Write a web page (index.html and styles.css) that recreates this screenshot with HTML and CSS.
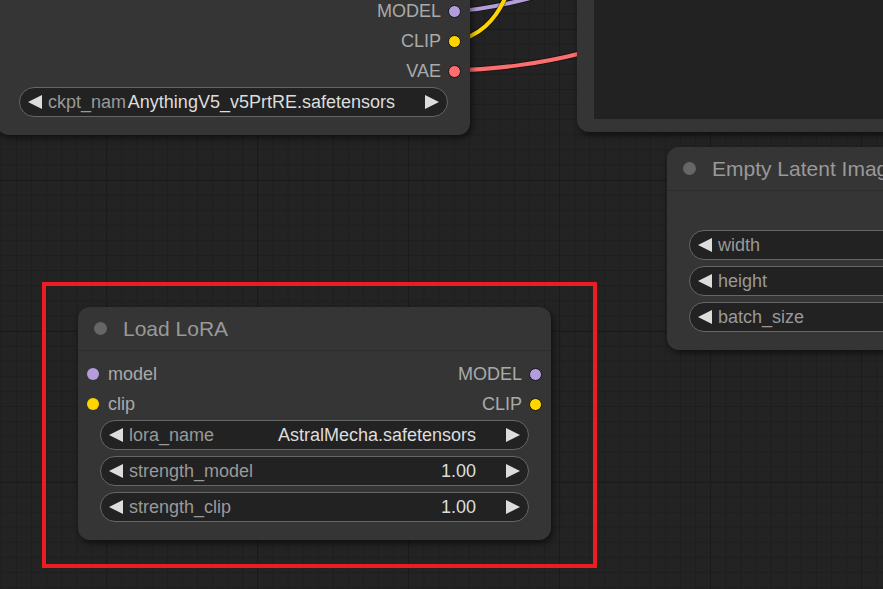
FILE: index.html
```html
<!DOCTYPE html>
<html>
<head>
<meta charset="utf-8">
<link rel="stylesheet" href="styles.css">
</head>
<body>
<div class="canvas">
  <svg class="links" width="883" height="589" viewBox="0 0 883 589">
    <g fill="none" stroke-linecap="round">
      <path d="M455 11 C 480 10, 510 4, 545 -6" stroke="rgba(0,0,0,0.35)" stroke-width="6"/>
      <path d="M455 11 C 480 10, 510 4, 545 -6" stroke="#b39ddb" stroke-width="4"/>
      <path d="M455 40 C 478 38, 496 20, 506 -4" stroke="rgba(0,0,0,0.35)" stroke-width="6"/>
      <path d="M455 40 C 478 38, 496 20, 506 -4" stroke="#ffd500" stroke-width="4"/>
      <path d="M455 70 C 490 70, 540 64, 582 53" stroke="rgba(0,0,0,0.35)" stroke-width="6"/>
      <path d="M455 70 C 490 70, 540 64, 582 53" stroke="#ff6e6e" stroke-width="4"/>
    </g>
  </svg>

  <!-- Load Checkpoint (cut off at top) -->
  <div class="node node-ckpt">
    <div class="title"><span class="tdot"></span><span class="ttext">Load Checkpoint</span></div>
    <div class="body">
      <div class="slot"><span></span><span class="out">MODEL <i class="dot model ring"></i></span></div>
      <div class="slot"><span></span><span class="out">CLIP <i class="dot clip ring"></i></span></div>
      <div class="slot"><span></span><span class="out">VAE <i class="dot vae ring"></i></span></div>
      <div class="widgets">
        <div class="widget"><span class="arr l"></span><span class="wlabel">ckpt_nam</span><span class="wvalue">AnythingV5_v5PrtRE.safetensors</span><span class="arr r"></span></div>
      </div>
    </div>
  </div>

  <!-- Image preview node (cut off) -->
  <div class="node node-preview">
    <div class="preview-area"></div>
  </div>

  <!-- Empty Latent Image -->
  <div class="node node-latent">
    <div class="title"><span class="tdot"></span><span class="ttext">Empty Latent Image</span></div>
    <div class="body">
      <div class="slot"><span></span><span class="out">LATENT <i class="dot latent ring"></i></span></div>
      <div class="widgets">
        <div class="widget"><span class="arr l"></span><span class="wlabel">width</span><span class="wvalue">512</span><span class="arr r"></span></div>
        <div class="widget"><span class="arr l"></span><span class="wlabel">height</span><span class="wvalue">512</span><span class="arr r"></span></div>
        <div class="widget"><span class="arr l"></span><span class="wlabel">batch_size</span><span class="wvalue">1</span><span class="arr r"></span></div>
      </div>
    </div>
  </div>

  <!-- Load LoRA -->
  <div class="node node-lora">
    <div class="title"><span class="tdot"></span><span class="ttext">Load LoRA</span></div>
    <div class="body">
      <div class="slot"><span class="in"><i class="dot model"></i> model</span><span class="out">MODEL <i class="dot model ring"></i></span></div>
      <div class="slot"><span class="in"><i class="dot clip"></i> clip</span><span class="out">CLIP <i class="dot clip ring"></i></span></div>
      <div class="widgets">
        <div class="widget"><span class="arr l"></span><span class="wlabel">lora_name</span><span class="wvalue">AstralMecha.safetensors</span><span class="arr r"></span></div>
        <div class="widget"><span class="arr l"></span><span class="wlabel">strength_model</span><span class="wvalue">1.00</span><span class="arr r"></span></div>
        <div class="widget"><span class="arr l"></span><span class="wlabel">strength_clip</span><span class="wvalue">1.00</span><span class="arr r"></span></div>
      </div>
    </div>
  </div>

  <div class="highlight"></div>
</div>
</body>
</html>
```

FILE: styles.css
```css
html, body {
  margin: 0;
  padding: 0;
  width: 883px;
  height: 589px;
  overflow: hidden;
  background: #222;
}

.canvas {
  position: relative;
  width: 883px;
  height: 589px;
  overflow: hidden;
  font-family: "Liberation Sans", Arial, sans-serif;
  background-color: #232323;
  background-image:
    linear-gradient(to right, #1b1b1b 0, #1b1b1b 1.5px, transparent 1.5px),
    linear-gradient(to bottom, #1b1b1b 0, #1b1b1b 1.5px, transparent 1.5px),
    linear-gradient(to right, #1e1e1e 0, #1e1e1e 1px, transparent 1px),
    linear-gradient(to bottom, #1e1e1e 0, #1e1e1e 1px, transparent 1px);
  background-size: 151px 151px, 151px 151px, 15.1px 15.1px, 15.1px 15.1px;
  background-position: 106px 0, 0 29px, 0.8px 0, 0 13.5px;
}

.links {
  position: absolute;
  left: 0;
  top: 0;
}

.node {
  position: absolute;
  box-sizing: border-box;
  background: #353535;
  border-radius: 12px;
  box-shadow: 2px 3px 6px rgba(0, 0, 0, 0.55);
  display: flex;
  flex-direction: column;
}

.node-ckpt { left: -3px; top: -56px; width: 473px; }
.node-latent { left: 667px; top: 147px; width: 465px; }
.node-lora { left: 78px; top: 307px; width: 473px; }

.node-preview {
  left: 577px;
  top: -200px;
  width: 420px;
  height: 332px;
  padding: 0 0 13px 17px;
}
.preview-area {
  flex: 1;
  background: #222;
}

.title {
  height: 44px;
  box-sizing: border-box;
  border-bottom: 1px solid #2c2c2c;
  display: flex;
  align-items: center;
  padding-left: 16px;
  color: #999;
  font-size: 21px;
}
.tdot {
  width: 13px;
  height: 13px;
  border-radius: 50%;
  background: #666;
  margin-right: 16px;
  flex-shrink: 0;
}
.ttext { white-space: nowrap; }

.body {
  padding: 8px 0 18px;
  display: flex;
  flex-direction: column;
}

.slot {
  height: 30px;
  display: flex;
  align-items: center;
  justify-content: space-between;
  padding: 0 9px;
  color: #aaa;
  font-size: 18px;
}
.slot .in, .slot .out {
  display: flex;
  align-items: center;
  white-space: nowrap;
}
.slot .in .dot { margin-right: 9px; }
.slot .out .dot { margin-left: 7px; }

.dot {
  display: block;
  width: 12px;
  height: 12px;
  border-radius: 50%;
  box-sizing: border-box;
}
.dot.ring { border: 1.5px solid #151515; width: 13px; height: 13px; }
.dot.model { background: #b39ddb; }
.dot.clip { background: #ffd500; }
.dot.vae { background: #ff6e6e; }
.dot.latent { background: #ff9cf9; }

.widgets {
  display: flex;
  flex-direction: column;
  gap: 6px;
  padding: 1px 22px 0;
}

.widget {
  height: 30px;
  box-sizing: border-box;
  border: 1px solid #666;
  border-radius: 15px;
  background: #222;
  display: flex;
  align-items: center;
  padding: 0 8px;
  font-size: 18px;
  white-space: nowrap;
}
.arr {
  width: 0;
  height: 0;
  flex-shrink: 0;
  border-top: 7.5px solid transparent;
  border-bottom: 7.5px solid transparent;
}
.arr.l { border-right: 14.5px solid #ddd; }
.arr.r { border-left: 14.5px solid #ddd; }
.wlabel {
  color: #999;
  margin-left: 6px;
  flex: 1 1 auto;
  min-width: 0;
  overflow: hidden;
}
.wvalue {
  color: #ddd;
  margin-right: 30px;
  flex-shrink: 0;
}

.highlight {
  position: absolute;
  left: 42px;
  top: 282px;
  width: 555px;
  height: 286px;
  box-sizing: border-box;
  border: 4px solid #ed1c24;
}
```
